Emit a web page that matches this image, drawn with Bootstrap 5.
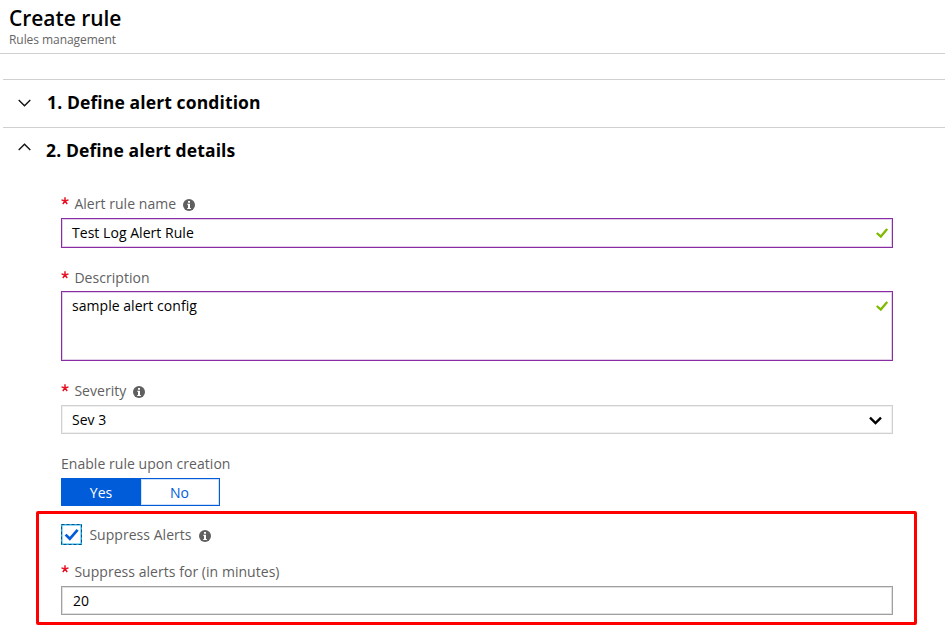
<!DOCTYPE html>
<html lang="en">
<head>
<meta charset="utf-8">
<meta name="viewport" content="width=device-width, initial-scale=1">
<title>Create rule</title>
<link href="https://cdn.jsdelivr.net/npm/bootstrap@5.3.0/dist/css/bootstrap.min.css" rel="stylesheet">
<style>
body{font-family:"Open Sans","Noto Sans",sans-serif;font-size:14px;line-height:20px;letter-spacing:.04px;color:#000;background:#fff;height:629px;overflow:hidden}
.page-head{height:54px;border-bottom:1px solid #d0d0d0;padding:5px 0 0 9px}
.page-title{font-size:21px;line-height:26px;font-weight:600;letter-spacing:-.05px}
.page-sub{font-size:12px;line-height:17px;color:#666;letter-spacing:-.06px}
.sections{margin:25px 0 0 3px}
.sec-head{height:48px;border-top:1px solid #d0d0d0;padding:0 0 2px 15px}
.sec-head h2{font-size:17.5px;line-height:24px;font-weight:700;letter-spacing:.12px;margin:-2px 0 0 16px}
.sec-head.open h2{margin-left:15px}
.sec-head svg{margin-top:1px}
.sec-head.open svg{margin-top:-8px}
.fields{margin-left:58px;width:832px}
.lbl{color:#5f5f5f;height:20px}
.req{width:13.4px;height:20px;line-height:12px;color:#e81123}
.info{margin:2px 0 0 7px}
.box{border:1px solid #d0d0d0;box-shadow:inset 0 0 0 1px #f0f0f0;padding:0 4px 0 10px;height:29px;border-radius:0;background:#fff}
.box.valid{height:30px;border-color:#8a2da5;box-shadow:inset 0 0 0 1px #e3cfe9}
.box.area{height:70px;padding-top:4px}
.box.area svg{margin-top:5px}
.box.pick{padding-right:10px}
.box.pick svg{margin-top:1px}
.box.num{border-color:#a0a0a0;box-shadow:inset 0 0 0 1px #e0e0e0;padding-left:11px}
.toggle{width:159px;height:28px;border:1px solid #015cda}
.toggle button{border:0;padding:1px 1px 0 0;border-radius:0;font-size:14px;line-height:20px}
.toggle .on{width:79px;background:#015cda;color:#fff}
.toggle .off{color:#015cda;background:#fff;box-shadow:inset 0 0 0 1px #cfe0f8}
.callout{border:3px solid #f00;border-radius:2px;margin:5px -24px 0 -25px;width:881px;height:114px;padding:11px 21px 0 22px}
.check{margin:-1px 7.4px 0 0}
</style>
</head>
<body>
<svg class="d-none" aria-hidden="true">
  <symbol id="info" viewBox="0 0 12 12"><circle cx="6" cy="6" r="6" fill="#5f5f5f"/><path d="M5 2h2v1.7H5zM4.2 4.8H7V9h.9v1H4.2V9H5V5.8h-.8z" fill="#fff"/></symbol>
  <symbol id="star" viewBox="0 0 8 8"><path d="M4 4V.3M4 4L.5 2.9M4 4l3.5-1.1M4 4L1.8 7M4 4l2.2 3" stroke="#e81123" stroke-width="1.5" fill="none"/></symbol>
  <symbol id="tick" viewBox="0 0 12 10"><path d="M.8 5l4 3.6L11.2.9" stroke="#7fba00" stroke-width="2.3" fill="none"/></symbol>
</svg>
<header class="page-head">
  <div class="page-title"><span>Create rule</span></div>
  <div class="page-sub"><span>Rules management</span></div>
</header>
<main class="sections">
  <div class="sec-head d-flex align-items-center">
    <svg width="13" height="8" viewBox="0 0 13 8"><path d="M.7 1l5.8 5.7L12.3 1" fill="none" stroke="#111" stroke-width="1.4"/></svg>
    <h2>1. Define alert condition</h2>
  </div>
  <div class="sec-head open d-flex align-items-center">
    <svg width="13" height="8" viewBox="0 0 13 8"><path d="M.7 7l5.8-5.7L12.3 7" fill="none" stroke="#111" stroke-width="1.4"/></svg>
    <h2>2. Define alert details</h2>
  </div>
  <div class="fields">
    <div class="lbl d-flex align-items-center" style="margin-top:19px"><span class="req"><svg width="8" height="8"><use href="#star"/></svg></span><span>Alert rule name</span><svg class="info" width="12" height="12"><use href="#info"/></svg></div>
    <div class="box valid d-flex align-items-center justify-content-between" style="margin-top:4px"><span>Test Log Alert Rule</span><svg width="12" height="10"><use href="#tick"/></svg></div>
    <div class="lbl d-flex align-items-center" style="margin-top:20px"><span class="req"><svg width="8" height="8"><use href="#star"/></svg></span><span>Description</span></div>
    <div class="box valid area d-flex align-items-start justify-content-between" style="margin-top:3px"><span>sample alert config</span><svg width="12" height="10"><use href="#tick"/></svg></div>
    <div class="lbl d-flex align-items-center" style="margin-top:20px"><span class="req"><svg width="8" height="8"><use href="#star"/></svg></span><span>Severity</span><svg class="info" width="12" height="12"><use href="#info"/></svg></div>
    <div class="box pick d-flex align-items-center justify-content-between" style="margin-top:4px"><span>Sev 3</span><svg width="13" height="9" viewBox="0 0 13 9"><path d="M1 1.7l5.5 5.4L12 1.7" fill="none" stroke="#000" stroke-width="2.4"/></svg></div>
    <div class="lbl" style="margin-top:20px"><span>Enable rule upon creation</span></div>
    <div class="toggle d-flex" style="margin-top:4px"><button class="on">Yes</button><button class="off flex-fill">No</button></div>
    <div class="callout">
      <div class="lbl d-flex align-items-center"><svg class="check flex-shrink-0" width="21" height="21" viewBox="0 0 21 21"><rect x=".75" y=".75" width="19.5" height="19.5" fill="#fff" stroke="#25b4ea" stroke-width="1.5"/><rect x=".5" y=".5" width="20" height="20" fill="none" stroke="#0b4f86" stroke-dasharray="3 2"/><path d="M4.6 10.6l4.2 4.2 7.8-9" fill="none" stroke="#015cda" stroke-width="2.7"/></svg><span>Suppress Alerts</span><svg class="info" width="12" height="12"><use href="#info"/></svg></div>
      <div class="lbl d-flex align-items-center" style="margin-top:17px"><span class="req"><svg width="8" height="8"><use href="#star"/></svg></span><span>Suppress alerts for (in minutes)</span></div>
      <div class="box num d-flex align-items-center" style="margin-top:4px"><span>20</span></div>
    </div>
  </div>
</main>
<script src="https://cdn.jsdelivr.net/npm/bootstrap@5.3.0/dist/js/bootstrap.bundle.min.js"></script>
</body>
</html>
